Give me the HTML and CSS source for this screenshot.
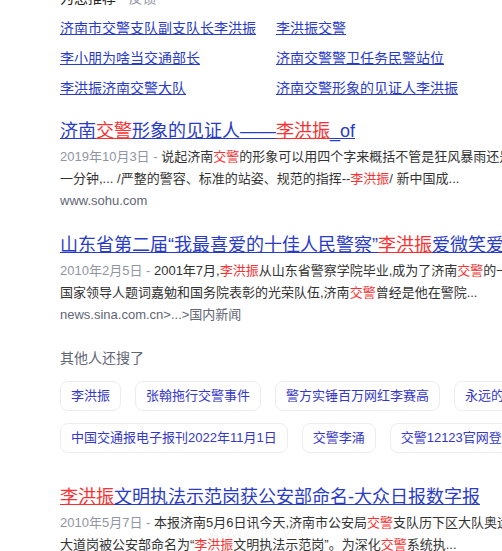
FILE: index.html
```html
<!DOCTYPE html>
<html lang="zh-CN">
<head>
<meta charset="utf-8">
<title>李洪振 交警</title>
<link rel="stylesheet" href="styles.css">
</head>
<body>
<div class="page">
  <section class="rec">
    <div class="rec-head">为您推荐 <span class="muted">· 反馈</span></div>
    <div class="rec-grid">
      <a class="rec-link" href="#">济南市交警支队副支队长李洪振</a>
      <a class="rec-link" href="#">李洪振交警</a>
      <a class="rec-link" href="#">李小朋为啥当交通部长</a>
      <a class="rec-link" href="#">济南交警警卫任务民警站位</a>
      <a class="rec-link" href="#">李洪振济南交警大队</a>
      <a class="rec-link" href="#">济南交警形象的见证人李洪振</a>
    </div>
  </section>

  <section class="result r1">
    <a class="title" href="#">济南<em>交警</em>形象的见证人——<em>李洪振</em>_of</a>
    <div class="snippet">
      <div class="line"><span class="date">2019年10月3日 - </span>说起济南<em>交警</em>的形象可以用四个字来概括不管是狂风暴雨还是烈日炎炎</div>
      <div class="line">一分钟,... /严整的警容、标准的站姿、规范的指挥--<em>李洪振</em>/ 新中国成...</div>
      <div class="line source">www.sohu.com</div>
    </div>
  </section>

  <section class="result r2">
    <a class="title" href="#">山东省第二届“我最喜爱的十佳人民警察”<em>李洪振</em>爱微笑爱岗敬业</a>
    <div class="snippet">
      <div class="line"><span class="date">2010年2月5日 - </span>2001年7月,<em>李洪振</em>从山东省警察学院毕业,成为了济南<em>交警</em>的一员</div>
      <div class="line">国家领导人题词嘉勉和国务院表彰的光荣队伍,济南<em>交警</em>曾经是他在警院...</div>
      <div class="line source">news.sina.com.cn&gt;...&gt;国内新闻</div>
    </div>
  </section>

  <section class="others">
    <div class="others-head">其他人还搜了</div>
    <div class="tag-row">
      <a class="tag" href="#">李洪振</a>
      <a class="tag" href="#">张翰拖行交警事件</a>
      <a class="tag" href="#">警方实锤百万网红李赛高</a>
      <a class="tag" href="#">永远的交警</a>
    </div>
    <div class="tag-row">
      <a class="tag" href="#">中国交通报电子报刊2022年11月1日</a>
      <a class="tag" href="#">交警李涌</a>
      <a class="tag" href="#">交警12123官网登录</a>
    </div>
  </section>

  <section class="result r3">
    <a class="title" href="#"><em>李洪振</em>文明执法示范岗获公安部命名-大众日报数字报</a>
    <div class="snippet">
      <div class="line"><span class="date">2010年5月7日 - </span>本报济南5月6日讯今天,济南市公安局<em>交警</em>支队历下区大队奥运路</div>
      <div class="line">大道岗被公安部命名为“<em>李洪振</em>文明执法示范岗”。为深化<em>交警</em>系统执...</div>
    </div>
  </section>
</div>
<div class="watermark">www.ddrn.vip</div>
</body>
</html>
```

FILE: styles.css
```css
html, body {
  margin: 0;
  padding: 0;
  overflow: hidden;
  background: #fff;
}
body {
  font-family: "Liberation Sans", "Noto Sans CJK SC", sans-serif;
  color: #333;
  position: relative;
  height: 551px;
}
em {
  font-style: normal;
  color: #f73131;
}
a {
  text-decoration: underline;
}
.page {
  padding-left: 60px;
  margin-top: -12px;
  width: 700px;
}

/* recommend block */
.rec-head {
  font-size: 14px;
  line-height: 20px;
  color: #222;
}
.muted {
  color: #9195a3;
}
.rec-grid {
  margin-top: 5px;
  display: grid;
  grid-template-columns: 216px 260px;
  grid-auto-rows: 30px;
  align-items: center;
}
.rec-link {
  font-size: 14px;
  line-height: 30px;
  color: #2a3bc8;
  justify-self: start;
}

/* results */
.result {
  white-space: nowrap;
}
.r1 { margin-top: 15px; }
.r2 { margin-top: 20px; }
.r3 { margin-top: 31px; }
.title {
  display: inline-block;
  font-size: 18px;
  line-height: 26px;
  color: #2a3bc8;
}
.title em {
  text-decoration: underline;
}
.snippet {
  margin-top: 2px;
  font-size: 13px;
  line-height: 22px;
}
.line {
  white-space: nowrap;
}
.date {
  color: #9195a3;
}
.source {
  color: #626675;
}

/* others searched */
.others {
  margin-top: 22px;
}
.others-head {
  font-size: 14px;
  line-height: 21px;
  color: #626675;
}
.tag-row {
  display: flex;
  gap: 14px;
  margin-top: 12px;
  white-space: nowrap;
}
.tag {
  flex: none;
  height: 28px;
  line-height: 28px;
  padding: 0 10px;
  border: 1px solid #ededf0;
  border-radius: 8px;
  font-size: 13px;
  color: #3437c9;
  text-decoration: none;
}

.watermark {
  position: absolute;
  left: 208px;
  top: 524px;
  font-size: 16px;
  color: rgba(0, 0, 0, 0.05);
  font-family: "Liberation Sans", sans-serif;
}
```
